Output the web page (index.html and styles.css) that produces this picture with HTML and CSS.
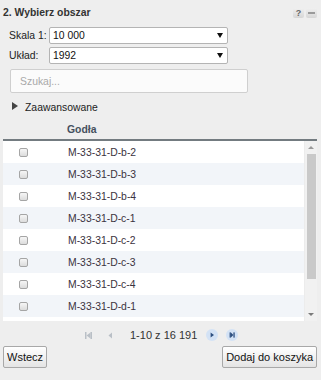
FILE: index.html
```html
<!DOCTYPE html>
<html lang="pl">
<head>
<meta charset="utf-8">
<link rel="stylesheet" href="styles.css">
</head>
<body>
<div class="panel">
  <div class="head">
    <div class="title">2. Wybierz obszar</div>
    <div class="tools">
      <span class="tool">?</span>
      <span class="tool tool-min"><span class="dash"></span></span>
    </div>
  </div>

  <div class="form">
    <label class="lbl">Skala 1:</label>
    <div class="select"><span>10 000</span><span class="caret"></span></div>
    <label class="lbl">Układ:</label>
    <div class="select"><span>1992</span><span class="caret"></span></div>
  </div>

  <div class="search">Szukaj...</div>

  <div class="adv"><span class="tri"></span><span>Zaawansowane</span></div>

  <div class="grid">
    <div class="ghead"><span>Godła</span></div>
    <div class="gbody">
      <div class="rows">
        <div class="row"><span class="cb"></span><span class="name">M-33-31-D-b-2</span></div>
        <div class="row alt"><span class="cb"></span><span class="name">M-33-31-D-b-3</span></div>
        <div class="row"><span class="cb"></span><span class="name">M-33-31-D-b-4</span></div>
        <div class="row alt"><span class="cb"></span><span class="name">M-33-31-D-c-1</span></div>
        <div class="row"><span class="cb"></span><span class="name">M-33-31-D-c-2</span></div>
        <div class="row alt"><span class="cb"></span><span class="name">M-33-31-D-c-3</span></div>
        <div class="row"><span class="cb"></span><span class="name">M-33-31-D-c-4</span></div>
        <div class="row alt"><span class="cb"></span><span class="name">M-33-31-D-d-1</span></div>
        <div class="row"></div>
      </div>
      <div class="sbar">
        <span class="sup"></span>
        <span class="thumb"></span>
        <span class="sdown"></span>
      </div>
    </div>
  </div>

  <div class="pager">
    <svg class="pi first" width="7" height="7" viewBox="0 0 7 7"><rect x="0" y="0" width="1.5" height="7" fill="#b9bfc6"/><rect x="5.5" y="0" width="1.5" height="7" fill="#b9bfc6"/><path d="M5.5 0.5 L1.5 3.5 L5.5 6.5 Z" fill="#b9bfc6"/></svg>
    <svg class="pi prev" width="5" height="7" viewBox="0 0 5 7"><path d="M4 0.5 L0.5 3.5 L4 6.5 Z" fill="#b9bfc6"/></svg>
    <span class="ptext">1-10 z 16 191</span>
    <svg class="pc next" width="12" height="12" viewBox="0 0 12 12"><circle cx="6" cy="6" r="6" fill="#d3e2f5"/><path d="M4.6 3.4 L8 6 L4.6 8.6 Z" fill="#2d4f80"/></svg>
    <svg class="pc last" width="12" height="12" viewBox="0 0 12 12"><circle cx="6" cy="6" r="6" fill="#d3e2f5"/><rect x="3.6" y="3.4" width="1.3" height="5.2" fill="#2d4f80"/><path d="M4.9 3.4 L7.4 6 L4.9 8.6 Z" fill="#2d4f80"/><rect x="7.4" y="3.4" width="1.3" height="5.2" fill="#2d4f80"/></svg>
  </div>

  <div class="actions">
    <button class="btn">Wstecz</button>
    <button class="btn">Dodaj do koszyka</button>
  </div>
</div>
</body>
</html>
```

FILE: styles.css
```css
* { box-sizing: border-box; }
html, body {
  margin: 0;
  padding: 0;
  background: #eeeeee;
  width: 321px;
  height: 380px;
  overflow: hidden;
  font-family: "Liberation Sans", Arial, sans-serif;
  font-size: 10.4px;
  color: #222;
}
.panel {
  padding: 0 4px 0 3px;
}
.head {
  height: 24px;
  display: flex;
  align-items: center;
  justify-content: space-between;
  padding-top: 1px;
}
.title {
  font-weight: bold;
  color: #333;
  font-size: 10.4px;
}
.tools {
  display: flex;
  gap: 2px;
}
.tool {
  width: 11px;
  height: 10px;
  border-radius: 2px;
  background: linear-gradient(#f0f0f0, #d6d6d6);
  color: #666;
  font-size: 9px;
  font-weight: bold;
  line-height: 10px;
  text-align: center;
  display: flex;
  align-items: center;
  justify-content: center;
}
.dash {
  display: block;
  width: 7px;
  height: 2px;
  background: #9a9a9a;
}
.form {
  margin: 3px 0 0 6px;
  display: grid;
  grid-template-columns: 40px 179px;
  row-gap: 3px;
  align-items: center;
}
.lbl { color: #222; }
.select {
  height: 17px;
  background: #fff;
  border: 1px solid #b4b4b4;
  border-radius: 2px;
  display: flex;
  align-items: center;
  justify-content: space-between;
  padding: 0 4px 0 3px;
  color: #111;
}
.caret {
  width: 0;
  height: 0;
  border-left: 3px solid transparent;
  border-right: 3px solid transparent;
  border-top: 5px solid #111;
}
.search {
  margin: 5px 0 0 7px;
  width: 238px;
  height: 24px;
  background: #fbfbfb;
  border: 1px solid #cfcfcf;
  border-radius: 2px;
  color: #a9a9a9;
  padding-left: 9px;
  display: flex;
  align-items: center;
}
.adv {
  margin: 7px 0 0 9px;
  height: 14px;
  display: flex;
  align-items: center;
  gap: 7px;
  color: #222;
}
.tri {
  width: 0;
  height: 0;
  border-top: 4px solid transparent;
  border-bottom: 4px solid transparent;
  border-left: 6px solid #444;
  margin-top: -2px;
}
.grid {
  margin-top: 2px;
  width: 314px;
}
.ghead {
  height: 25px;
  border-bottom: 2px solid #737b80;
  display: flex;
  align-items: center;
  padding: 4px 0 0 64px;
  font-weight: bold;
  color: #45505e;
}
.gbody {
  height: 180px;
  display: flex;
  background: #fff;
}
.rows {
  width: 301px;
  overflow: hidden;
}
.row {
  height: 22px;
  display: flex;
  align-items: center;
  background: #ffffff;
}
.row.alt { background: #f2f5f9; }
.cb {
  width: 9px;
  height: 9px;
  margin-left: 16px;
  border: 1px solid #a5a5a5;
  border-radius: 2px;
  background: linear-gradient(#f6f6f6, #dcdcdc);
}
.name {
  margin-left: 40px;
  color: #3a3340;
}
.sbar {
  width: 13px;
  background: #f1f1f1;
  border-left: 1px solid #ececec;
  display: flex;
  flex-direction: column;
  align-items: center;
}
.sup {
  margin-top: 5px;
  width: 0;
  height: 0;
  border-left: 3px solid transparent;
  border-right: 3px solid transparent;
  border-bottom: 3px solid #9a9a9a;
}
.thumb {
  margin-top: 5px;
  width: 9px;
  height: 125px;
  background: #c9c9c9;
}
.sdown {
  margin-top: auto;
  margin-bottom: 5px;
  width: 0;
  height: 0;
  border-left: 3px solid transparent;
  border-right: 3px solid transparent;
  border-top: 3px solid #7a7a7a;
}
.pager {
  height: 25px;
  display: flex;
  align-items: center;
  padding: 3px 0 0 82px;
}
.pager > * { flex-shrink: 0; }
.pi.prev { margin-left: 16px; }
.ptext {
  margin-left: 17px;
  font-size: 11px;
  line-height: 14px;
  color: #333;
  white-space: nowrap;
}
.pc.next { margin-left: 9px; }
.pc.last { margin-left: 8px; }
.actions {
  display: flex;
  justify-content: space-between;
}
.btn {
  height: 22px;
  font-family: "Liberation Sans", Arial, sans-serif;
  font-size: 11px;
  color: #111;
  background: linear-gradient(#ffffff, #e4e4e4);
  border: 1px solid #a8a8a8;
  border-radius: 2px;
  padding: 0 3px;
  margin: 0;
}
```
